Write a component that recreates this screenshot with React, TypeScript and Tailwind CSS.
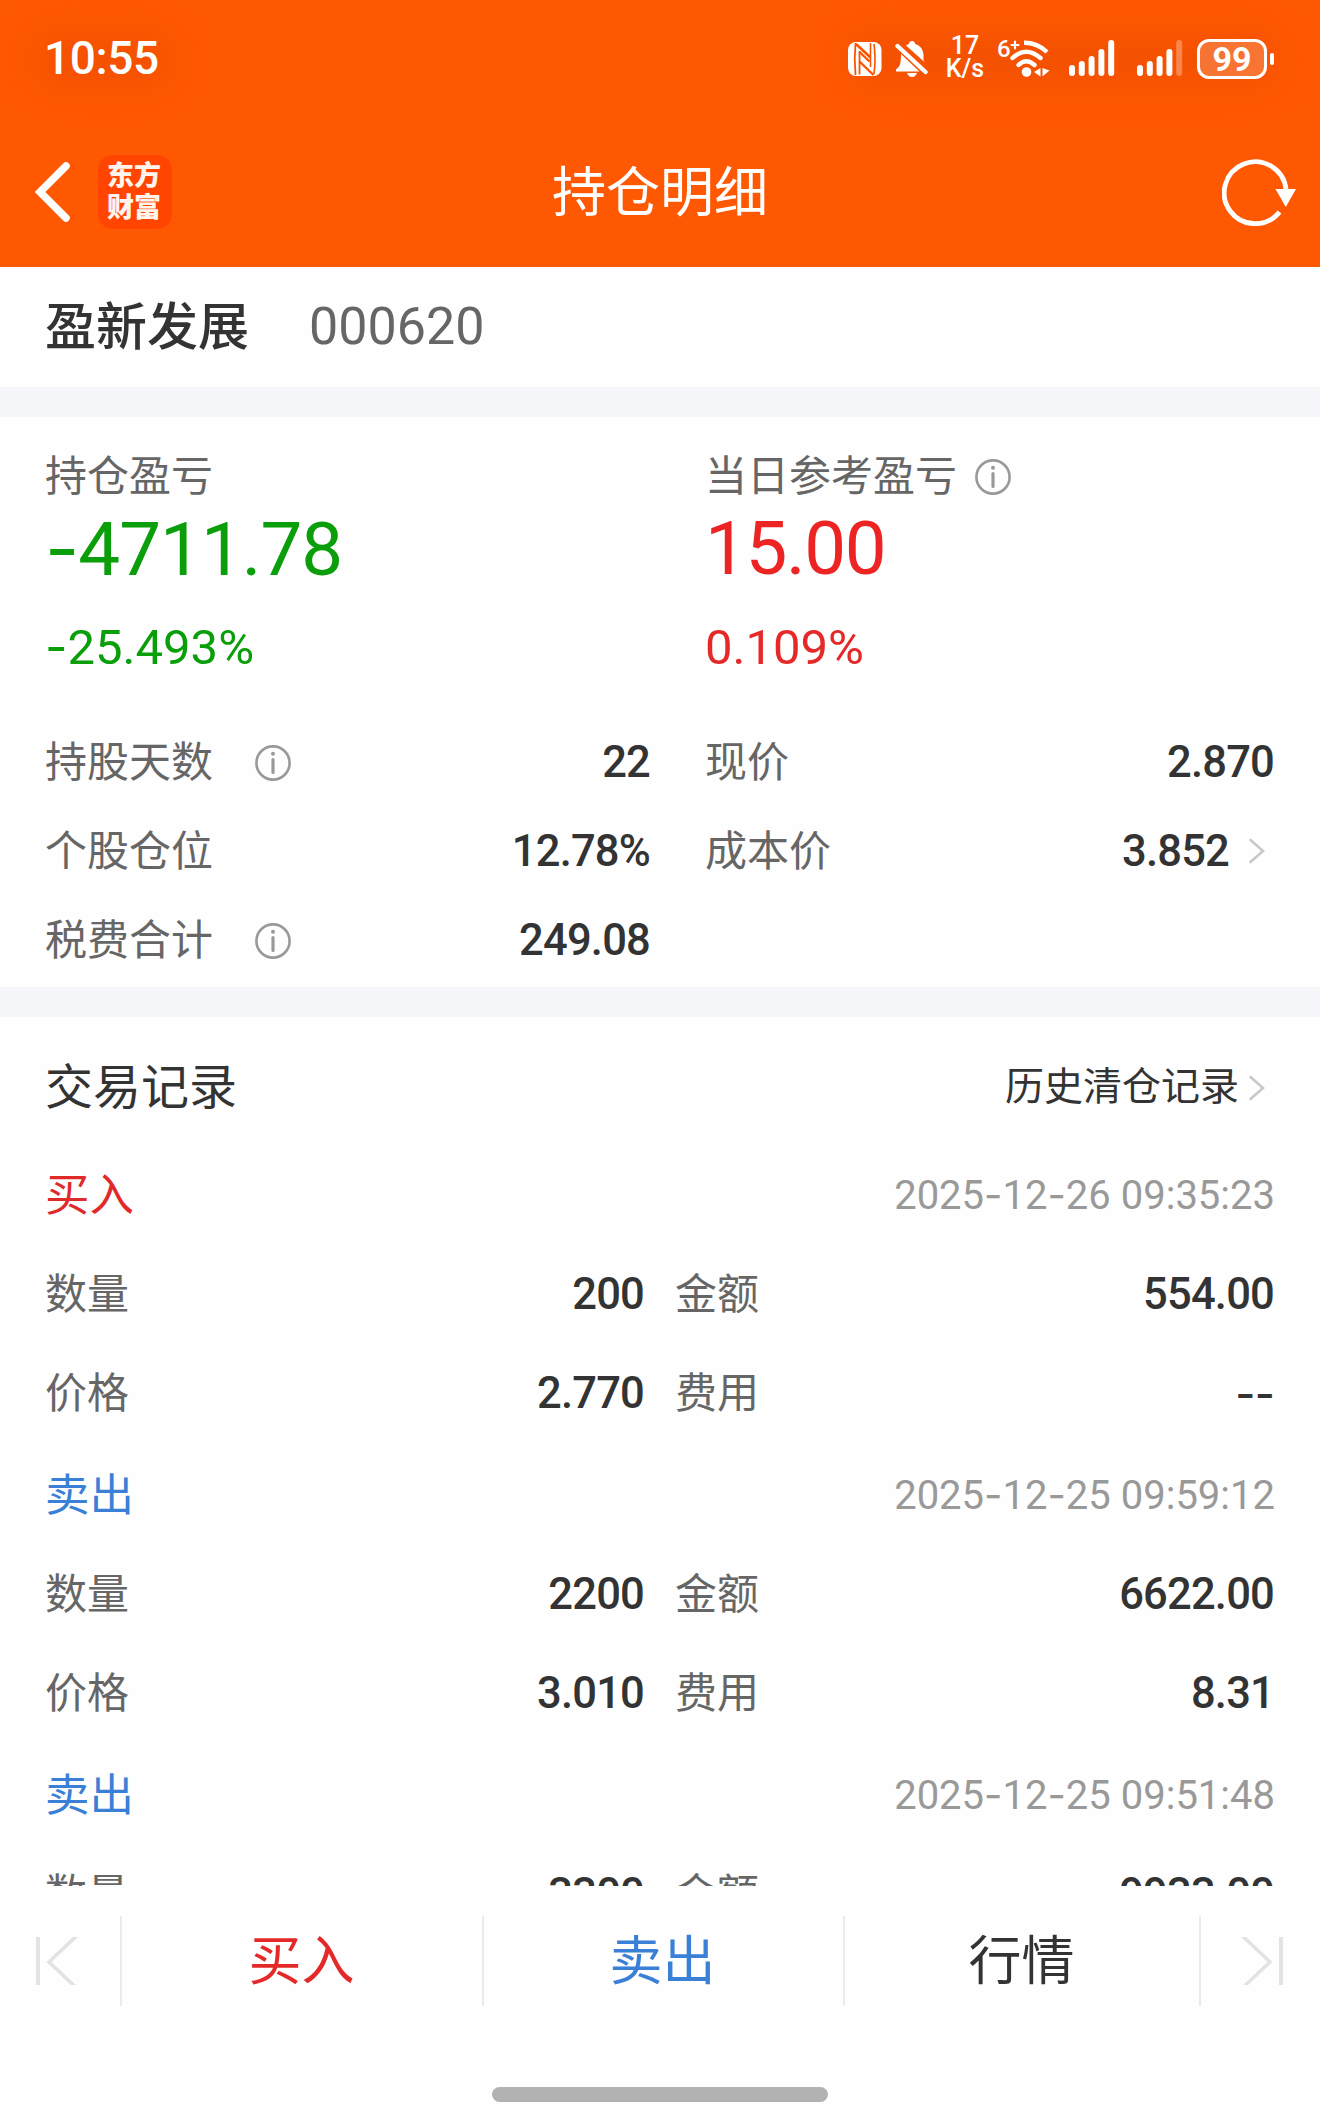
import { Fragment } from "react";
import clsx from "clsx";

type RecordItem = {
  side: "buy" | "sell";
  time: string;
  amount: string;
  money: string;
  price?: string;
  fee?: string;
};

const records: RecordItem[] = [
  { side: "buy", time: "2025-12-26 09:35:23", amount: "200", money: "554.00", price: "2.770", fee: "--" },
  { side: "sell", time: "2025-12-25 09:59:12", amount: "2200", money: "6622.00", price: "3.010", fee: "8.31" },
  { side: "sell", time: "2025-12-25 09:51:48", amount: "3300", money: "9933.00" },
];

// Roboto's hyphen is too short next to its digits, so it is set in Inter
function Num({ text }: { text: string }) {
  const parts = text.split("-");
  return (
    <>
      {parts.map((part, i) => (
        <Fragment key={i}>
          {i > 0 && <span className="font-['Inter']">-</span>}
          {part}
        </Fragment>
      ))}
    </>
  );
}

function InfoIcon() {
  return (
    <svg width="36" height="36" viewBox="0 0 36 36" fill="none" className="shrink-0">
      <circle cx="18" cy="18" r="16.6" stroke="#999" strokeWidth="2.6" />
      <circle cx="18" cy="8.8" r="2" fill="#999" />
      <path d="M18 14.5v13" stroke="#999" strokeWidth="3.2" strokeLinecap="round" />
    </svg>
  );
}

function ChevronRight() {
  return (
    <svg width="18" height="26" viewBox="0 0 18 26" fill="none" className="shrink-0">
      <path d="M2.5 2L15 13L2.5 24" stroke="#c8c8c8" strokeWidth="2.6" strokeLinecap="round" />
    </svg>
  );
}

function Signal({ weak }: { weak?: boolean }) {
  return (
    <svg width="46" height="38" viewBox="0 0 46 38" fill="#fff">
      <rect x="0" y="25" width="6" height="11" rx="3" />
      <rect x="9.8" y="21" width="6" height="15" rx="3" />
      <rect x="19.6" y="16" width="6" height="20" rx="3" />
      <rect x="29.4" y="9" width="6" height="27" rx="3" />
      <rect x="39.2" y="0" width="6" height="36" rx="3" opacity={weak ? 0.3 : 1} />
    </svg>
  );
}

function StatusBar() {
  return (
    <div className="relative flex h-[117px] items-center justify-between pl-[44px] pr-[46px]">
      <div className="absolute left-[35px] top-[36px] h-[46px] w-[135px] rounded-full bg-[#e84a00] opacity-60 blur-[18px]" />
      <div className="absolute left-[850px] top-[36px] h-[46px] w-[425px] rounded-full bg-[#e84a00] opacity-60 blur-[18px]" />
      <span className="relative pb-[2px] text-[46px] font-medium leading-none tracking-[-0.4px]">10:55</span>
      <div className="relative flex items-center">
        <svg width="34" height="36" viewBox="0 0 34 36" className="mr-[13px]">
          <rect x="0" y="1" width="33.5" height="34" rx="8" fill="#fff" />
          <g stroke="#f95402" fill="none">
            <path d="M7.500 2Q6 18 7.500 34" strokeWidth="1.8" />
            <path d="M8 3L22.500 16.500" strokeWidth="2.6" />
            <path d="M11.500 10V33.500" strokeWidth="1.8" />
            <path d="M11.500 11L21.500 20.500M11.500 20.500L25.500 34" strokeWidth="2.4" />
            <path d="M22.500 2V26M26 3Q28 18 26 33" strokeWidth="1.6" />
          </g>
        </svg>
        <svg width="34" height="38" viewBox="0 0 34 38" className="mr-[17px]">
          <path d="M11 5.5Q12.8 4.2 14 3.8Q14.3 1 17 1T20 3.8C26 6 28.5 10.5 28.5 15.5V20.5L30 22.5ZM6 14L24.5 31.5H1V29.5L4 26.5Q6 24 6 14ZM12 33H22Q20.5 37 17 37T12 33Z" fill="#fff" />
          <path d="M2.5 6L30.5 32" stroke="#fff" strokeWidth="4.4" strokeLinecap="round" />
          <path d="M7 4.5L31 27" stroke="#f85303" strokeWidth="1.8" />
        </svg>
        <div className="mr-[14px] flex w-[38px] flex-col items-center pb-[2px] text-[25px] font-medium leading-[22.5px]">
          <span>17</span>
          <span>K/s</span>
        </div>
        <div className="relative mr-[19px] h-[40px] w-[52px]">
          <span className="absolute -left-px -top-[2px] text-[24px] font-medium leading-[24px]">6</span>
          <svg width="52" height="40" viewBox="0 0 52 40" fill="none" stroke="#fff" strokeLinecap="round">
            <path d="M17 2.500v7M13.500 6h7" strokeWidth="2.2" />
            <path d="M26 3.700Q39 3.500 49 13" strokeWidth="4.400" strokeLinecap="butt" />
            <path d="M14.500 19Q28 6.500 42.500 19" strokeWidth="4.400" />
            <path d="M20.500 26Q28 18.500 36.500 26" strokeWidth="4.400" />
            <circle cx="28.500" cy="33" r="4.800" fill="#fff" stroke="none" />
            <path d="M36 33L42.500 29V37.500ZM51.500 31.500L44.500 29V37.500Z" fill="#fff" stroke="none" />
          </svg>
        </div>
        <div className="mr-[22px]"><Signal /></div>
        <div className="mr-[14px]"><Signal weak /></div>
        <div className="flex h-[40px] w-[70px] items-center justify-center rounded-[12px] border-[3px] border-white bg-white/20 text-[34px] font-bold leading-none">
          99
        </div>
        <div className="ml-[3px] h-[12px] w-[4px] rounded-full bg-white" />
      </div>
    </div>
  );
}

function NavBar() {
  return (
    <div className="grid h-[150px] grid-cols-3 items-center px-[22px]">
      <div className="flex items-center gap-[27px] pl-[12px]">
        <svg width="37" height="62" viewBox="0 0 37 62" fill="none">
          <path d="M32 5L6 31L32 57" stroke="#fff" strokeWidth="7.5" strokeLinecap="round" strokeLinejoin="miter" />
        </svg>
        <div className="flex h-[74px] w-[74px] flex-col items-center justify-center rounded-[15px] bg-[#ff4500] pr-[2px] text-[27px] font-black leading-[32px] text-[#fff5ee]">
          <span>东方</span>
          <span>财富</span>
        </div>
      </div>
      <h1 className="pt-[3px] text-center text-[54px] leading-none">持仓明细</h1>
      <div className="flex justify-end">
        <svg width="76" height="68" viewBox="0 0 76 68" fill="none">
          <path d="M57.500 54A31 31 0 1 1 64 31" stroke="#fff" strokeWidth="4.800" />
          <path d="M53.500 31h20.500L63.800 49Z" fill="#fff" />
        </svg>
      </div>
    </div>
  );
}

function StatRow({ label, value, info, arrow }: { label: string; value: string; info?: boolean; arrow?: boolean }) {
  return (
    <div className="flex h-[89px] items-center text-[42px]">
      <span className="pt-[3px] text-[#666]">{label}</span>
      {info && <span className="ml-[42px] mt-0.5"><InfoIcon /></span>}
      <span className="ml-auto pr-px pt-[3px] text-[43.5px] font-medium tracking-[-0.8px]">{value}</span>
      {arrow && <span className="ml-[18px] mr-[9px]"><ChevronRight /></span>}
    </div>
  );
}

function Summary() {
  return (
    <section className="grid h-[570px] grid-cols-[606px_570px] gap-x-[54px] pl-[45px] pt-[30px] leading-none">
      <div>
        <div className="flex h-14 items-center pt-[3px] text-[42px] text-[#666]">持仓盈亏</div>
        <div className="flex h-[88px] items-center pt-[4px] text-[74.5px] tracking-[-1px] text-[#0a9f0a]">
          <p><Num text="-4711.78" /></p>
        </div>
        <div className="mb-[14px] flex h-28 items-center text-[49px] text-[#0a9f0a]">
          <p><Num text="-25.493%" /></p>
        </div>
        <StatRow label="持股天数" value="22" info />
        <StatRow label="个股仓位" value="12.78%" />
        <StatRow label="税费合计" value="249.08" info />
      </div>
      <div>
        <div className="flex h-14 items-center gap-[18px] pt-[3px] text-[42px] text-[#666]">
          当日参考盈亏
          <InfoIcon />
        </div>
        <div className="flex h-[88px] items-center pt-[4px] text-[74.5px] tracking-[-1.4px] text-[#ec2424]">15.00</div>
        <div className="mb-[14px] flex h-28 items-center pt-px text-[49px] text-[#e52929]">0.109%</div>
        <StatRow label="现价" value="2.870" />
        <StatRow label="成本价" value="3.852" arrow />
      </div>
    </section>
  );
}

function Field({ label, value }: { label: string; value: string }) {
  return (
    <div className="flex items-center justify-between">
      <span className="pt-[3px] text-[42px] text-[#666]">{label}</span>
      <span className="pr-px pt-[3px] text-[43.5px] font-medium tracking-[-0.8px]"><Num text={value} /></span>
    </div>
  );
}

function TradeRecord({ item }: { item: RecordItem }) {
  const isBuy = item.side === "buy";
  return (
    <div className="h-[300px] pl-[45px] pr-[45px] leading-none">
      <div className="flex h-[100px] items-center justify-between">
        <span className={clsx("pt-[4px] text-[44.5px]", isBuy ? "text-[#e02a2a]" : "text-[#3a80d6]")}>
          {isBuy ? "买入" : "卖出"}
        </span>
        <span className="pt-[2px] text-[40px] text-[#999]"><Num text={item.time} /></span>
      </div>
      <div className="grid grid-cols-[600px_600px] grid-rows-[99px_99px] gap-x-[30px]">
        <Field label="数量" value={item.amount} />
        <Field label="金额" value={item.money} />
        {item.price && <Field label="价格" value={item.price} />}
        {item.fee && <Field label="费用" value={item.fee} />}
      </div>
    </div>
  );
}

function BottomBar() {
  return (
    <footer className="h-[234px] shrink-0 pt-[30px] leading-none">
      <div className="flex h-[90px] items-center text-[53px]">
        <div className="w-[120px] pl-[36px]">
          <svg width="44" height="48" viewBox="0 0 44 48" fill="none" stroke="#e3e3e3">
            <path d="M2 0v48" strokeWidth="4" />
            <path d="M40.500 -1L13 25L38.500 49" strokeWidth="3.6" />
          </svg>
        </div>
        <div className="h-full w-[2px] bg-[#ebebeb]" />
        <button className="w-[360px] pr-px pt-[3px] text-[#e52929]">买入</button>
        <div className="h-full w-[2px] bg-[#ebebeb]" />
        <button className="w-[359px] pr-[2px] pt-[3px] text-[#3a80d6]">卖出</button>
        <div className="h-full w-[2px] bg-[#ebebeb]" />
        <button className="w-[354px] pr-px pt-[3px]">行情</button>
        <div className="h-full w-[2px] bg-[#ebebeb]" />
        <div className="flex flex-1 justify-end pr-[37px]">
          <svg width="44" height="48" viewBox="0 0 44 48" fill="none" stroke="#e3e3e3">
            <path d="M42 0v48" strokeWidth="4" />
            <path d="M3.500 -1L31 25L5.500 49" strokeWidth="3.6" />
          </svg>
        </div>
      </div>
      <div className="mx-auto mt-[81px] h-[15px] w-[336px] rounded-full bg-[#b2b2b2]" />
    </footer>
  );
}

export default function App() {
  return (
    <div className="flex h-[2120px] w-[1320px] flex-col overflow-hidden bg-[#fefefe] font-['Roboto','Noto_Sans_CJK_SC',sans-serif] text-[#333]">
      <header className="h-[267px] shrink-0 bg-[#ff5802] text-white">
        <StatusBar />
        <NavBar />
      </header>
      <main className="flex-1 overflow-hidden">
        <section className="flex h-[120px] items-center gap-[60px] pl-[45px] leading-none">
          <h2 className="text-[51px] font-medium">盈新发展</h2>
          <span className="text-[52px] text-[#666]">000620</span>
        </section>
        <div className="h-[30px] bg-[#f6f7fa]" />
        <Summary />
        <div className="h-[30px] bg-[#f6f7fa]" />
        <section>
          <div className="flex h-[127px] items-center justify-between pl-[45px] pr-[54px] pt-[14px] leading-none">
            <h2 className="text-[48px]">交易记录</h2>
            <a className="flex items-center gap-[9px] text-[39px]">
              历史清仓记录
              <ChevronRight />
            </a>
          </div>
          {records.map((item) => (
            <TradeRecord key={item.time} item={item} />
          ))}
        </section>
      </main>
      <BottomBar />
    </div>
  );
}
